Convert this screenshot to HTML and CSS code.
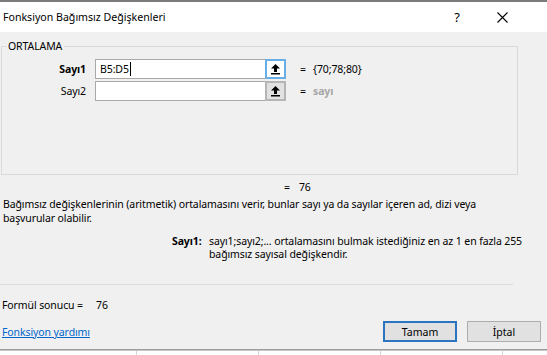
FILE: index.html
```html
<!DOCTYPE html>
<html lang="tr">
<head>
  <meta charset="UTF-8">
  <title>Fonksiyon Bağımsız Değişkenleri</title>
  <link rel="stylesheet" href="styles.css">
</head>
<body>
  <div class="window">
    <div class="titlebar">
      <span class="title">Fonksiyon Bağımsız Değişkenleri</span>
      <span class="help">?</span>
      <svg class="close" width="11" height="11" viewBox="0 0 11 11">
        <path d="M0.5 0.5 L10.5 10.5 M10.5 0.5 L0.5 10.5" stroke="#000" stroke-width="1.1" fill="none"/>
      </svg>
    </div>

    <div class="panel">
      <fieldset class="args">
        <legend>ORTALAMA</legend>
        <div class="arg">
          <span class="arg-name bold">Sayı1</span>
          <div class="ref"><span>B5:D5</span><span class="caret"></span></div>
          <span class="collapse focused">
            <svg width="9" height="11" viewBox="0 0 9 11"><path d="M4.5 0 L0 4.5 H3 V8 H6 V4.5 H9 Z M0 9 H9 V10.5 H0 Z" fill="#000"/></svg>
          </span>
          <span class="eq">=</span>
          <span class="val">{70;78;80}</span>
        </div>
        <div class="arg">
          <span class="arg-name">Sayı2</span>
          <div class="ref"></div>
          <span class="collapse">
            <svg width="9" height="11" viewBox="0 0 9 11"><path d="M4.5 0 L0 4.5 H3 V8 H6 V4.5 H9 Z M0 9 H9 V10.5 H0 Z" fill="#000"/></svg>
          </span>
          <span class="eq">=</span>
          <span class="val muted">sayı</span>
        </div>
      </fieldset>

      <div class="result">=<span class="num">76</span></div>
      <p class="desc">Bağımsız değişkenlerinin (aritmetik) ortalamasını verir, bunlar sayı ya da sayılar içeren ad, dizi veya başvurular olabilir.</p>

      <div class="argdesc">
        <span class="argdesc-name">Sayı1:</span>
        <p>sayı1;sayı2;... ortalamasını bulmak istediğiniz en az 1 en fazla 255 bağımsız sayısal değişkendir.</p>
      </div>

      <div class="separator"></div>

      <div class="formula">Formül sonucu =<span class="num">76</span></div>

      <div class="footer">
        <a href="#" class="help-link">Fonksiyon yardımı</a>
        <div class="buttons">
          <button class="btn default">Tamam</button>
          <button class="btn">İptal</button>
        </div>
      </div>
    </div>
  </div>

  <div class="sheet">
    <div class="cell first"></div>
    <div class="cell"></div>
    <div class="cell"></div>
    <div class="cell"></div>
    <div class="cell"></div>
  </div>
</body>
</html>
```

FILE: styles.css
```css
* {
  box-sizing: border-box;
}

body {
  margin: 0;
  width: 547px;
  height: 355px;
  overflow: hidden;
  background: #fff;
  font-family: 'Noto Sans', sans-serif;
  font-size: 10.5px;
  letter-spacing: -0.1px;
  color: #000;
}

/* Dialog window */
.window {
  border-top: 2px solid #7b7b7b;
  border-bottom: 1px solid #9b9b9b;
  box-shadow: 0 1px 0 #c8c8c8;
}

.titlebar {
  height: 30px;
  background: #fff;
  display: flex;
  align-items: center;
  padding-left: 3px;
  font-size: 10.6px;
  letter-spacing: 0;
}

.title {
  flex: 1;
}

.help {
  font-size: 13px;
  margin-right: 37px;
}

.close {
  margin-right: 39px;
}

.panel {
  background: #f0f0f0;
  height: 317px;
  padding-top: 6px;
}

/* Argument group */
.args {
  margin: 0 29px 0 1px;
  padding: 5px 0 0;
  height: 137px;
  border: 1px solid #d9d9d9;
  min-inline-size: 0;
}

.args legend {
  margin-left: 4px;
  padding: 0 2px;
  line-height: 16px;
}

.arg {
  display: flex;
  align-items: center;
  height: 20px;
  margin-bottom: 2px;
}

.arg-name {
  width: 84px;
  text-align: right;
  margin-right: 9px;
}

.bold {
  font-weight: bold;
}

.ref {
  width: 170px;
  height: 20px;
  background: #fff;
  border: 1px solid #a9a9a9;
  border-right: none;
  padding-left: 4px;
  display: flex;
  align-items: center;
}

.caret {
  width: 1px;
  height: 14px;
  background: #000;
  margin-left: 1px;
}

.collapse {
  width: 21px;
  height: 20px;
  background: #e1e1e1;
  border: 2px solid #b5b5b5;
  display: flex;
  align-items: center;
  justify-content: center;
}

.collapse.focused {
  background: #fff;
  border: 2px solid #6aaee6;
}

.eq {
  margin-left: 14px;
  width: 13px;
}

.muted {
  color: #a6a6a6;
  font-weight: bold;
}

/* Texts under the group */
.result {
  margin-top: 4px;
  padding-left: 284px;
  line-height: 16px;
}

.num {
  margin-left: 9px;
}

.formula .num {
  margin-left: 13px;
}

.desc {
  margin: 2px 0 0;
  padding-left: 3px;
  width: 484px;
  line-height: 14px;
}

.argdesc {
  display: flex;
  margin-top: 10px;
  padding-left: 172px;
  line-height: 13px;
}

.argdesc-name {
  font-weight: bold;
  width: 37px;
}

.argdesc p {
  margin: 0;
  width: 330px;
}

.separator {
  margin: 23px 34px 0 0;
  border-top: 1px solid #dcdcdc;
}

.formula {
  margin-top: 12px;
  padding-left: 2px;
  line-height: 16px;
}

.footer {
  display: flex;
  align-items: center;
  justify-content: space-between;
  margin-top: 8px;
  padding: 0 6px 0 2px;
}

.help-link {
  color: #0066cc;
  text-decoration: underline;
}

.buttons {
  display: flex;
  gap: 10px;
}

.btn {
  width: 74px;
  height: 21px;
  font-family: inherit;
  font-size: 10.5px;
  background: #e1e1e1;
  border: 1px solid #adadad;
  padding: 0;
}

.btn.default {
  border: 2px solid #2a74c0;
}

/* Worksheet behind the dialog */
.sheet {
  display: flex;
  height: 4px;
  margin-top: 1px;
  overflow: hidden;
}

.cell {
  width: 122px;
  border-right: 1px solid #d4d4d4;
  flex-shrink: 0;
}

.cell.first {
  width: 137px;
}
```
